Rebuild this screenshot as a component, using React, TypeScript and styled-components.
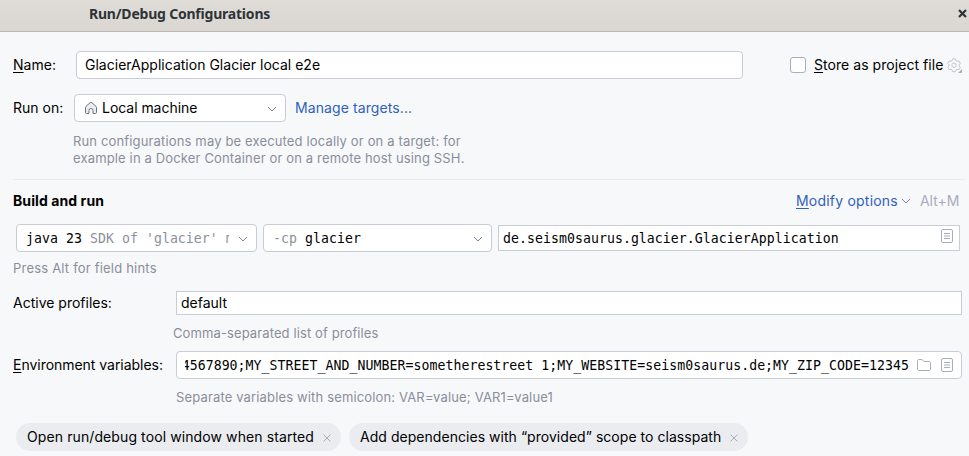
import React from "react";
import styled, { createGlobalStyle } from "styled-components";

const border = "#c9ccd6";
const muted = "#8a8e9c";
const ui = `Inter, "Open Sans", sans-serif`;
const mono = `"DejaVu Sans Mono", "Liberation Mono", monospace`;

const GlobalStyle = createGlobalStyle`
  * { box-sizing: border-box; }
  body { margin: 0; background: #f7f8fa; }
`;

const Dialog = styled.div`
  width: 969px;
  height: 456px;
  overflow: hidden;
  background: #f7f8fa;
  color: #000;
  font: 14px/20px ${ui};
  white-space: pre;
`;

const TitleBar = styled.header`
  display: flex;
  justify-content: space-between;
  align-items: center;
  height: 32px;
  padding: 0 2px 3px 89px;
  background: linear-gradient(#dfdcd8, #dad6d2);
  border-bottom: 1px solid #bfb8b1;
  color: #2e3436;
`;

const Title = styled.h1`
  margin: 0;
  font: 700 14px/20px "Noto Sans", sans-serif;
  letter-spacing: -0.21px;
`;

const Row = styled.div<{ $top?: number; $left?: number; $height?: number; $gap?: number }>`
  display: flex;
  align-items: center;
  margin-top: ${(p) => p.$top ?? 0}px;
  padding-left: ${(p) => p.$left ?? 13}px;
  height: ${(p) => p.$height ?? 28}px;
  gap: ${(p) => p.$gap ?? 0}px;
`;

const Label = styled.label<{ $width?: number; $spacing?: number }>`
  flex: none;
  width: ${(p) => (p.$width ? `${p.$width}px` : "auto")};
  letter-spacing: ${(p) => p.$spacing ?? 0.03}px;
`;

const Mnemonic = styled.span`
  text-decoration: underline;
  text-decoration-thickness: 1px;
  text-underline-offset: 2px;
  text-decoration-skip-ink: none;
`;

const Field = styled.div<{ $width: number; $height?: number; $square?: boolean; $pad?: string }>`
  display: flex;
  flex: none;
  align-items: center;
  width: ${(p) => p.$width}px;
  height: ${(p) => p.$height ?? 28}px;
  padding: ${(p) => p.$pad ?? "0 8px"};
  background: #fff;
  border: 1px solid ${border};
  border-radius: ${(p) => (p.$square ? 0 : 4)}px;
`;

const Value = styled.span<{ $spacing?: number }>`
  flex: 1;
  letter-spacing: ${(p) => p.$spacing ?? 0.015}px;
`;

const Code = styled.span<{ $end?: boolean; $width?: number }>`
  display: flex;
  flex: ${(p) => (p.$width ? "none" : 1)};
  width: ${(p) => (p.$width ? `${p.$width}px` : "auto")};
  min-width: 0;
  padding-top: 2px;
  overflow: hidden;
  justify-content: ${(p) => (p.$end ? "flex-end" : "flex-start")};
  font-family: ${mono};
  font-size: 13.2px;
  letter-spacing: 0.053px;
`;

const Dim = styled.span`
  color: #8b8f9d;
`;

const Link = styled.a<{ $spacing: number }>`
  color: #315fbd;
  letter-spacing: ${(p) => p.$spacing}px;
`;

const Hint = styled.p<{ $left: number; $top: number; $spacing?: number }>`
  margin: ${(p) => p.$top}px 0 0 ${(p) => p.$left}px;
  font-size: 13px;
  line-height: 17px;
  letter-spacing: ${(p) => p.$spacing ?? 0.15}px;
  color: ${muted};
`;

const Checkbox = styled.span`
  width: 16px;
  height: 16px;
  margin: 0 8px 0 47px;
  background: #fff;
  border: 1px solid #a8adbd;
  border-radius: 3px;
`;

const Divider = styled.hr`
  height: 1px;
  margin: 12px 4px 0 13px;
  border: 0;
  background: #ebecf0;
`;

const SectionTitle = styled.h2`
  margin: 0;
  width: 783px;
  font: 700 14px/20px ${ui};
  letter-spacing: 0.09px;
`;

const Shortcut = styled.span`
  margin-left: 9px;
  color: #a8adbd;
  letter-spacing: -0.03px;
`;

const Chip = styled.div<{ $width: number; $spacing: number }>`
  display: flex;
  align-items: center;
  justify-content: space-between;
  width: ${(p) => p.$width}px;
  height: 28px;
  padding: 0 10px 0 11px;
  border-radius: 14px;
  background: #ebecf0;
  letter-spacing: ${(p) => p.$spacing}px;
`;

const Icon = styled.svg<{ $m?: string }>`
  flex: none;
  display: block;
  margin: ${(p) => p.$m ?? 0};
  fill: none;
  stroke: ${(p) => p.color ?? "#818594"};
`;

const Chevron = ({ m }: { m?: string }) => (
  <Icon $m={m} width="10" height="6" viewBox="0 0 10 6">
    <path d="M1 1l4 4 4-4" />
  </Icon>
);

const HomeIcon = () => (
  <Icon $m="0 4px 0 0" width="14" height="14" viewBox="0 0 14 14" color="#6c707e">
    <path
      d="M1.5 6.4c0-.4.2-.8.5-1L6.2 1.6c.5-.4 1.1-.4 1.6 0L12 5.4c.3.2.5.6.5 1v5.1c0 .6-.4 1-1 1H9V9.5a2 2 0 0 0-4 0v3H2.5c-.6 0-1-.4-1-1z"
      fill="#ebecf0"
    />
  </Icon>
);

const DocIcon = ({ m }: { m?: string }) => (
  <Icon $m={m} width="12" height="14" viewBox="0 0 12 14" color="#a8adbd">
    <rect x=".5" y=".5" width="11" height="13" rx="1.5" />
    <path d="M3 4.5h6M3 9.5h6" />
    <path d="M3 7h6" strokeWidth="2" opacity=".5" />
  </Icon>
);

const FolderIcon = () => (
  <Icon $m="0 10px 0 8px" width="14" height="12" viewBox="0 0 14 12" color="#a8adbd">
    <path d="M.5 2c0-.8.7-1.5 1.5-1.5h2.9L7 2.5h5c.8 0 1.5.7 1.5 1.5v6c0 .8-.7 1.5-1.5 1.5H2c-.8 0-1.5-.7-1.5-1.5z" />
  </Icon>
);

const GearIcon = () => (
  <Icon $m="1px 0 0 4px" width="15" height="15" viewBox="0 0 15 15" color="#c3c5cb">
    <path
      d="M5.6.9h2.8l.6 1.8 1 .6 1.9-.4 1.4 2.4-1.2 1.4v1.2l1.2 1.4-1.4 2.4-1.9-.4-1 .6-.6 1.8H5.6L5 11.9l-1-.6-1.9.4L.7 9.3l1.2-1.4V6.7L.7 5.3l1.4-2.4 1.9.4 1-.6z"
      strokeLinejoin="round"
    />
    <circle cx="7" cy="7.2" r="2.2" />
    <path d="M15 11v4h-4z" fill="#afb1b8" stroke="none" />
  </Icon>
);

const RemoveIcon = () => (
  <Icon $m="2px 0 0" width="8" height="8" viewBox="0 0 8 8" color="#a8adbd">
    <path d="M.5.5l7 7M7.5.5l-7 7" />
  </Icon>
);

const CloseIcon = () => (
  <Icon $m="0 0 2px" width="9" height="9" viewBox="0 0 9 9" color="#2e3436">
    <path d="M1 1l7 7M8 1L1 8" strokeWidth="2.2" />
  </Icon>
);

export default function App() {
  return (
    <Dialog>
      <GlobalStyle />
      <TitleBar>
        <Title>Run/Debug Configurations</Title>
        <CloseIcon />
      </TitleBar>

      <Row $top={19}>
        <Label $width={63}><Mnemonic>N</Mnemonic>ame:</Label>
        <Field $width={667}><Value>GlacierApplication Glacier local e2e</Value></Field>
        <Checkbox />
        <Label $spacing={0.05}><Mnemonic>S</Mnemonic>tore as project file</Label>
        <GearIcon />
      </Row>

      <Row $top={15}>
        <Label $width={61} $spacing={0}>Run on:</Label>
        <Field $width={212} $pad="0 8px 0 9px">
          <HomeIcon />
          <Value $spacing={-0.04}>Local machine</Value>
          <Chevron m="2px 0 0" />
        </Field>
        <Row $left={9}><Link $spacing={0.1}>Manage targets...</Link></Row>
      </Row>
      <Hint $left={73} $top={11}>
        Run configurations may be executed locally or on a target: for{"\n"}example in a Docker Container or on a remote host using SSH.
      </Hint>

      <Divider />

      <Row $top={11} $height={20}>
        <SectionTitle>Build and run</SectionTitle>
        <Link $spacing={0.21}><Mnemonic>M</Mnemonic>odify options</Link>
        <Chevron m="0 0 0 3px" />
        <Shortcut>Alt+M</Shortcut>
      </Row>

      <Row $top={13} $left={16} $gap={6}>
        <Field $width={241} $pad="0 8px 0 9px">
          <Code $width={203}>java 23 <Dim>SDK of 'glacier' module</Dim></Code>
          <Chevron m="2px 0 0 auto" />
        </Field>
        <Field $width={229} $pad="0 8px 0 9px">
          <Code><Dim>-cp </Dim>glacier</Code>
          <Chevron m="2px 0 0" />
        </Field>
        <Field $width={462} $height={26} $square $pad="0 6px 0 4px">
          <Code>de.seism0saurus.glacier.GlacierApplication</Code>
          <DocIcon m="0 0 4px" />
        </Field>
      </Row>
      <Hint $left={13} $top={8} $spacing={0.2}>Press Alt for field hints</Hint>

      <Row $top={14} $height={24}>
        <Label $width={163} $spacing={0}>Active profiles:</Label>
        <Field $width={786} $height={24} $square $pad="0 4px">
          <Value $spacing={0}>default</Value>
        </Field>
      </Row>
      <Hint $left={173} $top={10} $spacing={0.11}>Comma-separated list of profiles</Hint>

      <Row $top={9}>
        <Label $width={163} $spacing={-0.03}><Mnemonic>E</Mnemonic>nvironment variables:</Label>
        <Field $width={786} $pad="0 8px">
          <Code $end>34567890;MY_STREET_AND_NUMBER=sometherestreet 1;MY_WEBSITE=seism0saurus.de;MY_ZIP_CODE=12345</Code>
          <FolderIcon />
          <DocIcon />
        </Field>
      </Row>
      <Hint $left={176} $top={10}>Separate variables with semicolon: VAR=value; VAR1=value1</Hint>

      <Row $top={17} $left={16} $gap={8}>
        <Chip $width={325} $spacing={0.1}>Open run/debug tool window when started<RemoveIcon /></Chip>
        <Chip $width={399} $spacing={0.04}>Add dependencies with “provided” scope to classpath<RemoveIcon /></Chip>
      </Row>
    </Dialog>
  );
}
